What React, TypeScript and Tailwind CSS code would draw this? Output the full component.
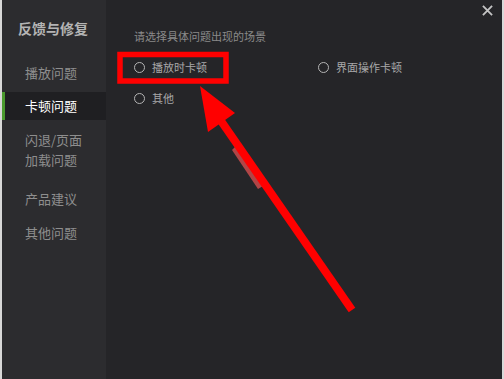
import { useState } from "react"

const menu = [
    { lines: ["播放问题"], space: "mt-[7px]" },
    { lines: ["卡顿问题"], space: "mt-[5px]" },
    { lines: ["闪退/页面", "加载问题"], space: "mt-[8px]" },
    { lines: ["产品建议"], space: "mt-[13px]" },
    { lines: ["其他问题"], space: "mt-[6px]" },
]

const Radio = (props: { label: string }) => {
    return <div className="flex items-center gap-[7px] h-[18px]">
        <span className="w-[11px] h-[11px] rounded-full border border-[#b5b5b5]" />
        <span className="text-[11px] text-[#a8a8a8]">{props.label}</span>
    </div>
}

const App = () => {
    const [active] = useState(1)

    return <div
        className="relative w-[504px] h-[379px] flex bg-[#252528] border-l-2 border-r-2 border-[#d8d8d8] overflow-hidden"
        style={{ fontFamily: '"Noto Sans CJK SC", "Noto Sans", sans-serif' }}
    >
        <div className="w-[104px] h-full bg-[#2c2c2f] flex flex-col">
            <div className="pl-[16px] pt-[18px] h-[52px] text-[14px] font-bold text-[#b4b4b4]">
                反馈与修复
            </div>
            <div className="flex flex-col">
                {
                    menu.map((item, index) => <div
                        key={index}
                        className={
                            (index === active
                                ? "flex flex-col justify-center pl-[20px] h-[28px] bg-[#1f1f22] border-l-[3px] border-[#4a9a2e] text-white text-[13px] "
                                : index === 2
                                    ? "flex flex-col justify-center pl-[23px] text-[#8e8e8e] text-[13px] leading-[20px] h-[44px] "
                                    : "flex flex-col justify-center pl-[23px] text-[#8e8e8e] text-[13px] h-[28px] ") + item.space
                        }
                    >
                        {item.lines.map((line, i) => <span key={i}>{line}</span>)}
                    </div>)
                }
            </div>
        </div>

        <div className="flex-1 pl-[28px] pt-[28px]">
            <div className="text-[11px] text-[#8a8a8a] h-[16px]">请选择具体问题出现的场景</div>
            <div className="grid grid-cols-[184px_1fr] mt-[14px] gap-y-[13px]">
                <Radio label="播放时卡顿" />
                <Radio label="界面操作卡顿" />
                <Radio label="其他" />
            </div>
        </div>

        <button className="absolute right-[9px] top-[5px] text-[#c4c4c4]">
            <svg width="11" height="11" viewBox="0 0 12 12">
                <path d="M1 1 L11 11 M11 1 L1 11" stroke="currentColor" strokeWidth="2" />
            </svg>
        </button>

        {/* annotation drawn over the dialog */}
        <svg className="absolute left-[-2px] top-0 pointer-events-none" width="504" height="379" viewBox="0 0 504 379">
            <rect x="120" y="54.5" width="106" height="26.5" fill="none" stroke="#ff0000" strokeWidth="5.5" />
            <path d="M236 146 L263 186 L258 189 L232 150 Z" fill="#e05050" opacity="0.75" />
            <polygon points="200,86 235,113 208,132" fill="#ff0000" />
            <line x1="219" y1="118" x2="352" y2="310" stroke="#ff0000" strokeWidth="8" />
        </svg>
    </div>
}

export default App
